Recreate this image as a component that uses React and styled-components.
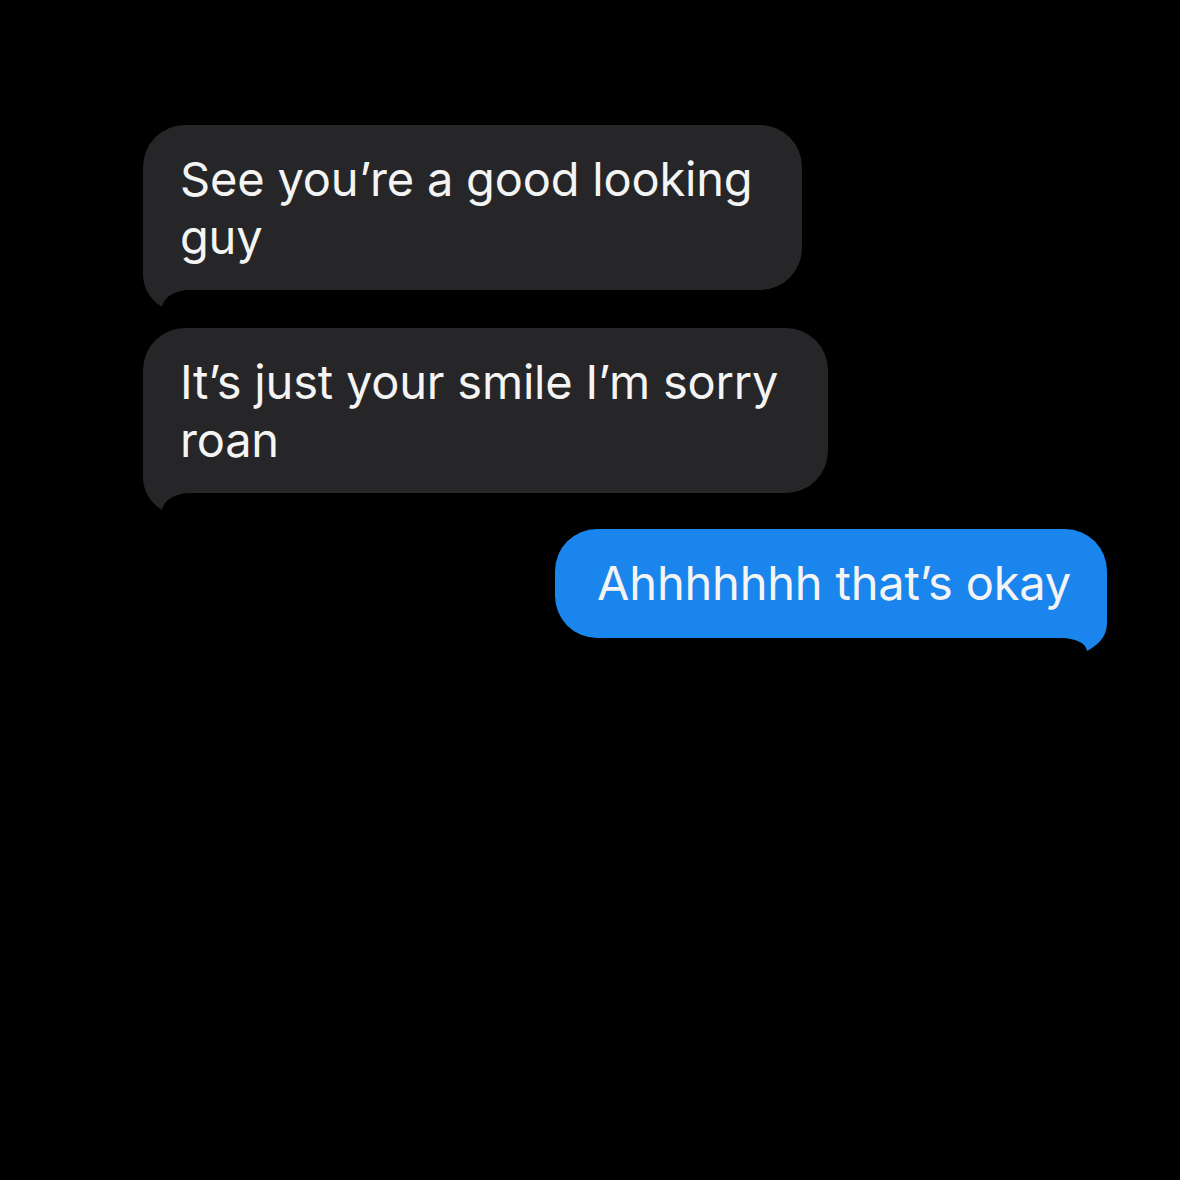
import React from "react"
import styled, { createGlobalStyle } from "styled-components"

const GlobalStyle = createGlobalStyle`
  html, body {
    margin: 0;
    padding: 0;
    background: #000;
  }
`

const Screen = styled.div`
  width: 1180px;
  height: 1180px;
  background: #000;
  display: flex;
  flex-direction: column;
  align-items: flex-start;
  padding: 125px 73px 0 143px;
  box-sizing: border-box;
  font-family: Inter, "Liberation Sans", sans-serif;
`

const Row = styled.div`
  align-self: ${({out}) => (out ? "flex-end" : "flex-start")};
  margin-bottom: ${({gap}) => gap}px;
`

const Bubble = styled.div`
  position: relative;
  background: ${({out}) => (out ? "#1b85ee" : "#262628")};
  color: #f4f4f4;
  font-size: 47px;
  line-height: 58px;
  letter-spacing: -0.2px;
  border-radius: 42px;
  padding: ${({out}) => (out ? "25px 36px 26px 42px" : "25px 50px 24px 37px")};
  white-space: nowrap;
`

const Text = styled.span`
  position: relative;
  z-index: 1;
`

const Tail = styled.svg`
  position: absolute;
  bottom: ${({out}) => (out ? "-13px" : "-17px")};
  ${({out}) => (out ? "right: 0;" : "left: 0;")}
  width: 60px;
  height: 60px;
  overflow: visible;
`

function Message({out, gap, children}) {
  const fill = out ? "#1b85ee" : "#262628"
  return (
    <Row out={out} gap={gap}>
      <Bubble out={out}>
        <Tail out={out} viewBox="0 0 60 60">
          {out ? (
            <path
              d="M60,0 L60,30 C60,40 58,50 40,60 C39,54 34,49 18,47 L0,47 L0,0 Z"
              fill={fill}
            />
          ) : (
            <path
              d="M0,0 L0,26 C0,38 4,50 19,60 C21,52 27,45 44,43 L60,43 L60,0 Z"
              fill={fill}
            />
          )}
        </Tail>
        <Text>{children}</Text>
      </Bubble>
    </Row>
  )
}

export default function App() {
  return (
    <>
      <GlobalStyle />
      <Screen>
        <Message gap={38}>
          See you’re a good looking
          <br />
          guy
        </Message>
        <Message gap={36}>
          It’s just your smile I’m sorry
          <br />
          roan
        </Message>
        <Message out gap={0}>
          Ahhhhhhh that’s okay
        </Message>
      </Screen>
    </>
  )
}
